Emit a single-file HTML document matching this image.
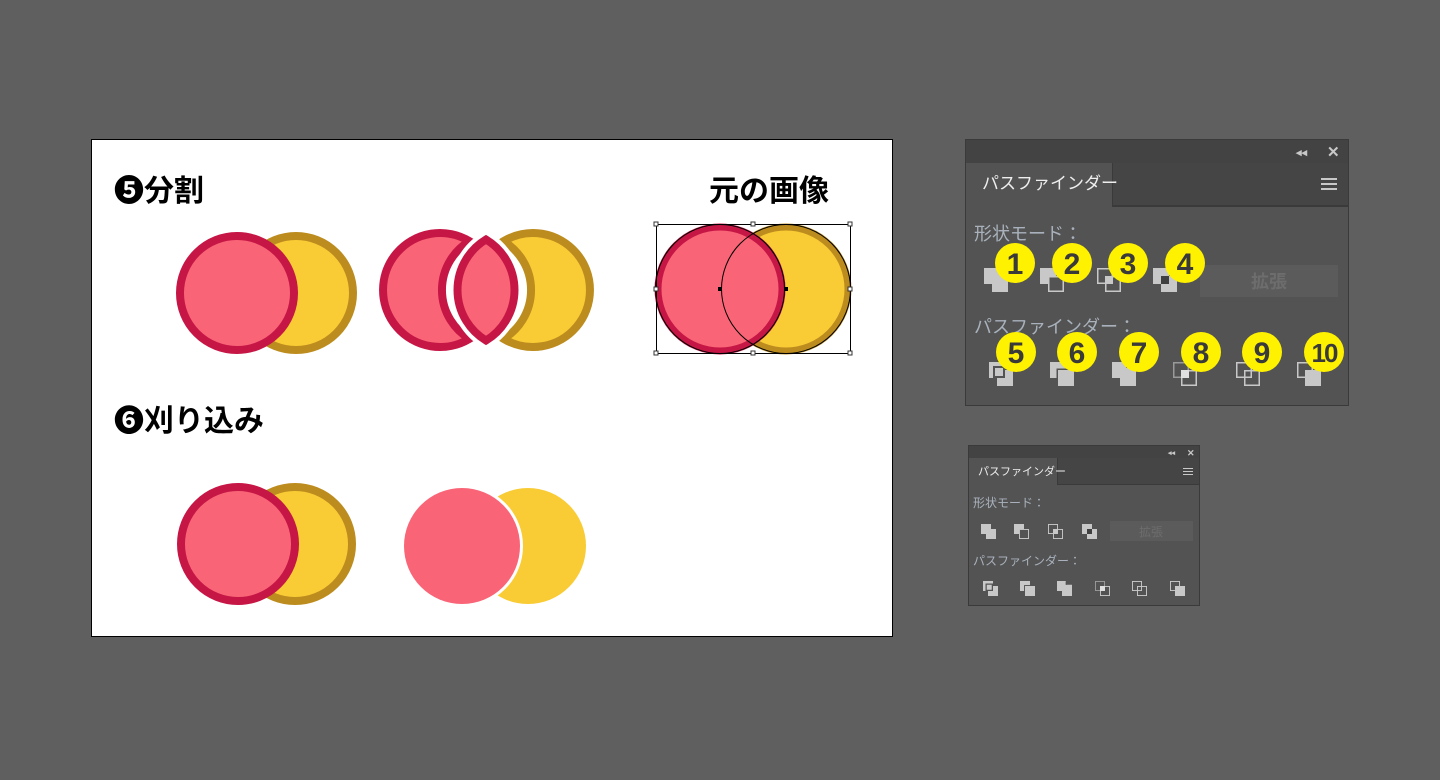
<!DOCTYPE html>
<html><head><meta charset="utf-8"><style>
html,body{margin:0;padding:0;background:#5f5f5f;width:1440px;height:780px;overflow:hidden}
svg{display:block}
.jp{font-family:"Liberation Sans","Noto Sans CJK JP",sans-serif}
</style></head><body>
<svg width="1440" height="780" viewBox="0 0 1440 780" xmlns="http://www.w3.org/2000/svg">
<defs>
<symbol id="i1" viewBox="0 0 24 24"><rect x="0" y="0" width="16" height="16" fill="#c8c8c8"/><rect x="8" y="8" width="16" height="16" fill="#c8c8c8"/></symbol>
<symbol id="i2" viewBox="0 0 24 24"><rect x="0" y="0" width="16" height="16" fill="#c8c8c8"/><rect x="8.75" y="8.75" width="14.5" height="14.5" fill="#535353" stroke="#c8c8c8" stroke-width="1.5"/></symbol>
<symbol id="i3" viewBox="0 0 24 24"><rect x="0.75" y="0.75" width="14.5" height="14.5" fill="none" stroke="#c8c8c8" stroke-width="1.5"/><rect x="8.75" y="8.75" width="14.5" height="14.5" fill="none" stroke="#c8c8c8" stroke-width="1.5"/><rect x="8" y="8" width="8" height="8" fill="#c8c8c8"/></symbol>
<symbol id="i4" viewBox="0 0 24 24"><rect x="0" y="0" width="16" height="16" fill="#c8c8c8"/><rect x="8" y="8" width="16" height="16" fill="#c8c8c8"/><rect x="8" y="8" width="8" height="8" fill="#404040"/></symbol>
<symbol id="p5" viewBox="0 0 24 24"><rect x="0" y="0" width="16" height="16" fill="#c8c8c8"/><rect x="8" y="8" width="16" height="16" fill="#c8c8c8"/><rect x="4" y="4" width="12" height="12" fill="#535353"/><rect x="6" y="6" width="8" height="8" fill="#c8c8c8"/></symbol>
<symbol id="p6" viewBox="0 0 24 24"><rect x="0" y="0" width="16" height="16" fill="#c8c8c8"/><rect x="6.5" y="6.5" width="17.5" height="17.5" fill="#535353"/><rect x="8" y="8" width="16" height="16" fill="#c8c8c8"/></symbol>
<symbol id="p7" viewBox="0 0 24 24"><rect x="0" y="0" width="14" height="16" fill="#c8c8c8"/><rect x="8" y="6" width="16" height="18" fill="#c8c8c8"/><rect x="14" y="2" width="2" height="4" fill="#535353"/></symbol>
<symbol id="p8" viewBox="0 0 24 24"><rect x="0.75" y="0.75" width="14.5" height="14.5" fill="none" stroke="#9a9a9a" stroke-width="1.5"/><rect x="8.75" y="8.75" width="14.5" height="14.5" fill="none" stroke="#c8c8c8" stroke-width="1.5"/><rect x="8" y="8" width="8" height="8" fill="#e0e0e0"/></symbol>
<symbol id="p9" viewBox="0 0 24 24"><rect x="0.75" y="0.75" width="14.5" height="14.5" fill="none" stroke="#c8c8c8" stroke-width="1.5"/><rect x="8.75" y="8.75" width="14.5" height="14.5" fill="none" stroke="#c8c8c8" stroke-width="1.5"/></symbol>
<symbol id="p10" viewBox="0 0 24 24"><rect x="0.75" y="0.75" width="14.5" height="14.5" fill="none" stroke="#c8c8c8" stroke-width="1.5"/><rect x="8" y="8" width="16" height="16" fill="#c8c8c8"/></symbol>
</defs>

<rect x="91.5" y="139.5" width="801" height="497" fill="#fff" stroke="#000" stroke-width="1"/>

<g class="jp" font-weight="bold" font-size="30" fill="#000">
<text x="114" y="201">❺分割</text>
<text x="709" y="201">元の画像</text>
<text x="114" y="431">❻刈り込み</text>
</g>

<circle cx="296" cy="293" r="57" fill="#f9cc36" stroke="#bd8c1e" stroke-width="8"/>
<circle cx="237" cy="293" r="57" fill="#f96577" stroke="#c61646" stroke-width="8"/>

<!-- divide -->
<path d="M469.5,241.2 A57,57 0 1 0 469.5,338.8 A57,57 0 0 1 469.5,241.2 Z" fill="#f96577" stroke="#c61646" stroke-width="8"/>
<path d="M503.5,241.2 A57,57 0 1 1 503.5,338.8 A57,57 0 0 0 503.5,241.2 Z" fill="#f9cc36" stroke="#bd8c1e" stroke-width="8"/>
<path d="M486,239.5 A59,59 0 0 1 486,340.5 A59,59 0 0 1 486,239.5 Z" fill="#fff" stroke="#fff" stroke-width="16" stroke-miterlimit="10"/>
<path d="M486,239.5 A59,59 0 0 1 486,340.5 A59,59 0 0 1 486,239.5 Z" fill="#f96577" stroke="#c61646" stroke-width="8" stroke-miterlimit="10"/>

<!-- original -->
<circle cx="786" cy="289" r="62" fill="#f9cc36" stroke="#bd8c1e" stroke-width="7"/>
<circle cx="720" cy="289" r="62" fill="#f96577" stroke="#c61646" stroke-width="7"/>
<circle cx="720" cy="289" r="64.5" fill="none" stroke="#000" stroke-width="1"/>
<circle cx="786" cy="289" r="64.5" fill="none" stroke="#000" stroke-width="1"/>
<rect x="656.5" y="224.5" width="194" height="129" fill="none" stroke="#000" stroke-width="1"/>
<g fill="#fff" stroke="#333" stroke-width="1">
<rect x="654" y="222" width="4" height="4"/><rect x="751" y="222" width="4" height="4"/><rect x="848" y="222" width="4" height="4"/>
<rect x="654" y="287" width="4" height="4"/><rect x="848" y="287" width="4" height="4"/>
<rect x="654" y="351" width="4" height="4"/><rect x="751" y="351" width="4" height="4"/><rect x="848" y="351" width="4" height="4"/>
</g>
<rect x="718" y="287" width="4" height="4" fill="#000"/><rect x="784" y="287" width="4" height="4" fill="#000"/>

<circle cx="295" cy="544" r="57" fill="#f9cc36" stroke="#bd8c1e" stroke-width="8"/>
<circle cx="238" cy="544" r="57" fill="#f96577" stroke="#c61646" stroke-width="8"/>

<circle cx="528" cy="546" r="58" fill="#f9cc36"/>
<circle cx="462" cy="546" r="58" fill="#f96577" stroke="#fff" stroke-width="6"/>
<circle cx="462" cy="546" r="58" fill="#f96577"/>

<!-- big panel -->
<rect x="965.5" y="139.5" width="383" height="266" fill="#535353" stroke="#3a3a3a" stroke-width="1"/>
<rect x="966" y="140" width="382" height="23" fill="#434343"/>
<rect x="966" y="163" width="382" height="43" fill="#454545"/>
<rect x="966" y="205" width="382" height="2" fill="#3a3a3a"/>
<rect x="966" y="163" width="146" height="44" fill="#535353"/>
<rect x="1112" y="163" width="1" height="44" fill="#3a3a3a"/>
<text x="1296" y="156" font-family="Liberation Sans,sans-serif" font-size="11" font-weight="bold" fill="#c8c8c8">◂◂</text>
<text x="1327" y="157" font-family="Liberation Sans,sans-serif" font-size="15" font-weight="bold" fill="#c8c8c8">✕</text>
<g fill="#c8c8c8"><rect x="1321" y="178" width="16" height="2"/><rect x="1321" y="183" width="16" height="2"/><rect x="1321" y="188" width="16" height="2"/></g>
<text class="jp" x="982" y="189" font-size="17" fill="#eee">パスファインダー</text>
<text class="jp" x="974" y="240" font-size="18" fill="#a9b2bc">形状モード：</text>
<text class="jp" x="974" y="333" font-size="18" fill="#a9b2bc">パスファインダー：</text>
<rect x="1200" y="265" width="138" height="32" fill="#5b5b5b"/>
<text class="jp" x="1269" y="288" font-size="18" fill="#6d6d6d" text-anchor="middle" font-weight="bold">拡張</text>
<use href="#i1" x="984" y="268" width="24" height="24"/>
<use href="#i2" x="1040" y="268" width="24" height="24"/>
<use href="#i3" x="1097" y="268" width="24" height="24"/>
<use href="#i4" x="1153" y="268" width="24" height="24"/>
<use href="#p5" x="989" y="362" width="24" height="24"/>
<use href="#p6" x="1050" y="362" width="24" height="24"/>
<use href="#p7" x="1112" y="362" width="24" height="24"/>
<use href="#p8" x="1173" y="362" width="24" height="24"/>
<use href="#p9" x="1236" y="362" width="24" height="24"/>
<use href="#p10" x="1297" y="362" width="24" height="24"/>
<g fill="#fff200">
<circle cx="1015" cy="263" r="20"/><circle cx="1072" cy="263" r="20"/><circle cx="1128" cy="263" r="20"/><circle cx="1185" cy="263" r="20"/>
<circle cx="1016" cy="352" r="20"/><circle cx="1077" cy="352" r="20"/><circle cx="1139" cy="352" r="20"/><circle cx="1201" cy="352" r="20"/><circle cx="1262" cy="352" r="20"/><circle cx="1324" cy="352" r="20"/>
</g>
<g font-family="Liberation Sans,sans-serif" font-weight="bold" font-size="30" fill="#3a3a3a" text-anchor="middle">
<text x="1015" y="274">1</text><text x="1072" y="274">2</text><text x="1128" y="274">3</text><text x="1185" y="274">4</text>
<text x="1016" y="363">5</text><text x="1077" y="363">6</text><text x="1139" y="363">7</text><text x="1201" y="363">8</text><text x="1262" y="363">9</text><text x="1324" y="362" font-size="26" letter-spacing="-2">10</text>
</g>

<!-- small panel -->
<rect x="968.5" y="445.5" width="231" height="160" fill="#535353" stroke="#3a3a3a" stroke-width="1"/>
<rect x="969" y="446" width="230" height="12" fill="#434343"/>
<rect x="969" y="458" width="230" height="27" fill="#454545"/>
<rect x="969" y="484" width="230" height="1" fill="#3a3a3a"/>
<rect x="969" y="458" width="88" height="27" fill="#535353"/>
<rect x="1057" y="458" width="1" height="27" fill="#3a3a3a"/>
<text x="1168" y="455" font-family="Liberation Sans,sans-serif" font-size="7" font-weight="bold" fill="#c8c8c8">◂◂</text>
<text x="1187" y="456" font-family="Liberation Sans,sans-serif" font-size="9" font-weight="bold" fill="#c8c8c8">✕</text>
<g fill="#c8c8c8"><rect x="1183" y="468" width="10" height="1"/><rect x="1183" y="471" width="10" height="1"/><rect x="1183" y="474" width="10" height="1"/></g>
<text class="jp" x="978" y="475" font-size="11" fill="#eee">パスファインダー</text>
<text class="jp" x="973" y="507" font-size="12" fill="#a9b2bc">形状モード：</text>
<text class="jp" x="973" y="565" font-size="12" fill="#a9b2bc">パスファインダー：</text>
<rect x="1110" y="521" width="83" height="20" fill="#5b5b5b"/>
<text class="jp" x="1151" y="536" font-size="12" fill="#6d6d6d" text-anchor="middle">拡張</text>
<use href="#i1" x="981" y="524" width="15" height="15"/>
<use href="#i2" x="1014" y="524" width="15" height="15"/>
<use href="#i3" x="1048" y="524" width="15" height="15"/>
<use href="#i4" x="1082" y="524" width="15" height="15"/>
<use href="#p5" x="983" y="581" width="15" height="15"/>
<use href="#p6" x="1020" y="581" width="15" height="15"/>
<use href="#p7" x="1057" y="581" width="15" height="15"/>
<use href="#p8" x="1095" y="581" width="15" height="15"/>
<use href="#p9" x="1132" y="581" width="15" height="15"/>
<use href="#p10" x="1170" y="581" width="15" height="15"/>
</svg>
</body></html>
